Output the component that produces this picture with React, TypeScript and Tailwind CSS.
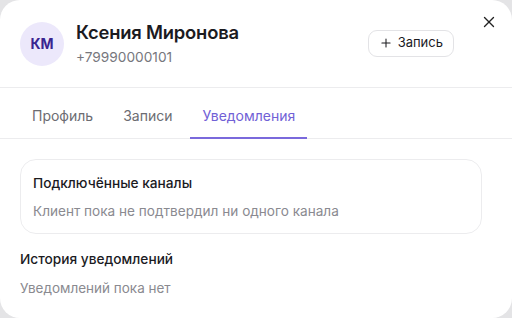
import { Plus, X } from "lucide-react";

const TABS = [
  { label: "Профиль", active: false },
  { label: "Записи", active: false },
  { label: "Уведомления", active: true },
];

export default function App() {
  return (
    <div className="w-[512px] h-[318px] bg-[#e4e4e6] font-['Inter',sans-serif]">
      <div className="relative w-full h-full bg-white rounded-[20px] overflow-hidden">
        {/* Close */}
        <button className="absolute right-[14px] top-[13px] text-[#222]">
          <X className="w-[18px] h-[18px]" strokeWidth={1.8} />
        </button>

        {/* Header */}
        <div className="flex items-center h-[88px] pl-5 pr-[58px] border-b border-[#ececee]">
          <div className="w-11 h-11 rounded-full bg-[#ece8fb] flex items-center justify-center text-[14px] font-bold text-[#3a2590]">
            КМ
          </div>
          <div className="ml-3 flex-1 -mt-[1px]">
            <div className="text-[18.4px] font-semibold text-[#1b1b1f] leading-[24px] tracking-[-0.2px]">
              Ксения Миронова
            </div>
            <div className="text-[13.7px] text-[#77777d] leading-[20px] mt-[3px]">+79990000101</div>
          </div>
          <button className="-mt-[1px] h-[27px] px-[10px] flex items-center gap-[5px] rounded-[9px] border border-[#e3e3e6] text-[13px] text-[#1b1b1f]">
            <Plus className="w-[14px] h-[14px]" strokeWidth={1.8} />
            Запись
          </button>
        </div>

        {/* Tabs */}
        <div className="flex px-5 h-[51px] border-b border-[#ececee]">
          {TABS.map((t) => (
            <div
              key={t.label}
              className={`px-3 flex items-end pb-[11px] text-[14px] border-b-2 -mb-[1px] mr-[6px] ${
                t.active ? "border-[#7a69dc] text-[#7161d6]" : "border-transparent text-[#6c6c72]"
              }`}
            >
              {t.label}
            </div>
          ))}
        </div>

        {/* Content */}
        <div className="pl-5 pr-[30px] pt-5">
          <div className="rounded-[16px] border border-[#ececee] px-3 pt-[13px] pb-[12px]">
            <div className="text-[13.7px] font-medium text-[#1b1b1f] leading-[20px]">Подключённые каналы</div>
            <div className="text-[13.6px] text-[#8a8a90] leading-[20px] mt-[8px]">
              Клиент пока не подтвердил ни одного канала
            </div>
          </div>
          <div className="mt-[15px] text-[13.7px] font-medium text-[#1b1b1f] leading-[20px]">История уведомлений</div>
          <div className="mt-[9px] text-[13.5px] text-[#8a8a90] leading-[20px]">Уведомлений пока нет</div>
        </div>
      </div>
    </div>
  );
}
